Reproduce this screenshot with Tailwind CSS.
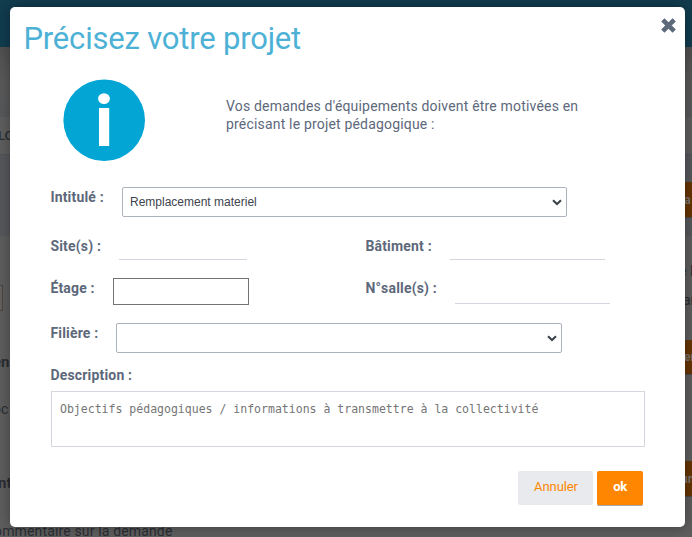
<!DOCTYPE html>
<html lang="fr">
<head>
<meta charset="utf-8">
<title>Précisez votre projet</title>
<script src="https://cdn.jsdelivr.net/npm/@tailwindcss/browser@4"></script>
</head>
<body class="relative h-[537px] w-[692px] overflow-hidden bg-[#5e5e5e] font-['Roboto',sans-serif] text-[#5d687b]">

<!-- dimmed page behind the dialog -->
<div class="flex h-[537px] flex-col overflow-hidden whitespace-nowrap text-[#2a2d33]" aria-hidden="true">
  <div class="h-[47px] shrink-0 bg-[#113d4f]"></div>
  <div class="h-[70px] shrink-0 bg-linear-to-b from-[#505050] via-[#5a5a5a] to-[#58595b]"></div>
  <div class="flex h-[38px] shrink-0 items-center border-b border-[#50545a] bg-[#5f5f5f] text-[13px] font-medium"><span class="-ml-[2px]">LO</span></div>
  <div class="flex h-[81px] shrink-0 items-start justify-end bg-[#56585c] pt-[27px]">
    <div class="flex h-9 w-[7px] items-center overflow-hidden border-b border-[#444950] bg-[#663500] text-[12px] font-bold text-[#7b746e]"><span class="-ml-[5px]">ra</span></div>
  </div>
  <div class="flex grow justify-between">
    <div class="flex w-[180px] flex-col overflow-hidden">
      <div class="mt-[49px] h-[26px] w-[3px] shrink-0 border-y border-r border-[#484643] bg-[#65615e]"></div>
      <div class="mt-[41px] h-5 text-[15px] leading-5 font-bold"><span class="-ml-[7px]">en</span></div>
      <div class="mt-[27px] h-5 text-[14px] leading-5"><span class="-ml-[7px]">oc</span></div>
      <div class="mt-[54px] h-5 text-[15px] leading-5 font-bold"><span class="-ml-[2px]">nt</span></div>
      <div class="mt-[28px] h-5 text-[14px] leading-5 tracking-[0.15px]"><span class="-ml-[6px]">ommentaire sur la demande</span></div>
    </div>
    <div class="flex w-[7px] flex-col overflow-hidden text-[14px]">
      <div class="mt-[25px] h-5 leading-5"><span class="-ml-[6px]">e H</span></div>
      <div class="mt-[9px] h-5 leading-5"><span class="-ml-[2px]">ar</span></div>
      <div class="mt-[30px] flex h-[35px] shrink-0 items-center border-b border-[#444950] bg-[#663500] text-[12px] font-bold text-[#7b746e]"><span class="-ml-px">er</span></div>
      <div class="mt-[86px] flex h-9 shrink-0 items-center border-b border-[#444950] bg-[#663500] text-[12px] font-bold text-[#7b746e]"><span class="-ml-[4px]">un</span></div>
    </div>
  </div>
</div>

<!-- dialog -->
<div role="dialog" class="absolute top-[7px] left-[10px] flex h-[520px] w-[675px] flex-col rounded-[5px] bg-white shadow-[0_0_14px_rgba(0,0,0,0.35)]">
  <div class="flex h-[72px] shrink-0 items-start justify-between pr-[9px] pl-[13.5px]">
    <h1 class="pt-[12px] text-[31px] leading-10 tracking-[-0.2px] text-[#4db1d6]">Précisez votre projet</h1>
    <svg class="mt-[11px] h-[15px] w-[15px]" viewBox="0 0 15 15" fill="none" stroke="#5d687b" stroke-width="4.6"><path d="M1.8 1.8 13.2 13.2M13.2 1.8 1.8 13.2"/></svg>
  </div>

  <div class="flex h-[82px] shrink-0 pl-[53px]">
    <svg class="h-[82px] w-[82px] shrink-0" viewBox="0 0 82 82"><circle cx="41.2" cy="41.2" r="40.8" fill="#03a5d5"/><ellipse cx="41" cy="19.6" rx="5.9" ry="5.4" fill="#fff"/><path d="M36 29h10.2v38H36z" fill="#fff"/></svg>
    <p class="mt-[18px] ml-[81px] w-[370px] text-[14px] leading-[18px] tracking-[0.18px]">Vos demandes d'équipements doivent être motivées en<br>précisant le projet pédagogique :</p>
  </div>

  <form class="flex flex-col pl-[40px] text-[14px] leading-5 font-bold">
    <div class="mt-[26px] flex h-[30px]">
      <label class="w-[72px] pl-[0.4px] tracking-[0.18px]">Intitulé :</label>
      <div class="flex h-[30px] w-[445px] items-center justify-between rounded-[2px] border border-[#adb3bc] pr-1 pl-[7px] font-['Liberation_Sans',sans-serif] text-[12px] font-normal text-[#3e444d]">
        <span>Remplacement materiel</span>
        <svg class="h-[7px] w-[10px]" viewBox="0 0 10 7" fill="none" stroke="#3a414b" stroke-width="2"><path d="M1 1.2 5 5 9 1.2"/></svg>
      </div>
    </div>
    <div class="mt-[19px] flex h-[24px]">
      <label class="w-[69px] pl-[0.4px] tracking-[0.18px]">Site(s) :</label>
      <div class="w-[128px] border-b border-[#d5d6dd]"></div>
      <label class="ml-[118px] w-[85px] pl-[0.4px] tracking-[0.18px]">Bâtiment :</label>
      <div class="w-[155px] border-b border-[#d5d6dd]"></div>
    </div>
    <div class="mt-[18px] flex h-[27px]">
      <label class="w-[63px] pl-[0.4px] tracking-[0.18px]">Étage :</label>
      <div class="w-[136px] border border-[#737373]"></div>
      <label class="ml-[116px] w-[90px] pl-[0.4px] tracking-[0.18px]">N°salle(s) :</label>
      <div class="h-[26px] w-[155px] border-b border-[#d5d6dd]"></div>
    </div>
    <div class="mt-[18px] flex h-[30px]">
      <label class="w-[66px] pl-[0.4px] tracking-[0.18px]">Filière :</label>
      <div class="flex h-[30px] w-[446px] items-center justify-end rounded-[2px] border border-[#adb3bc] pr-1">
        <svg class="h-[7px] w-[10px]" viewBox="0 0 10 7" fill="none" stroke="#3a414b" stroke-width="2"><path d="M1 1.2 5 5 9 1.2"/></svg>
      </div>
    </div>
    <label class="mt-[12px] h-[26px] pl-[0.4px] tracking-[0.18px]">Description :</label>
    <div class="ml-px h-[56px] w-[594px] border border-[#d5d6de] pt-[8px] pl-[8px] font-['DejaVu_Sans_Mono',monospace] text-[11.52px] leading-[18px] font-normal whitespace-nowrap text-[#757575]">Objectifs pédagogiques / informations à transmettre à la collectivité</div>
    <div class="mt-6 flex gap-1 pl-[468px] text-[13px]">
      <div class="flex h-[34px] w-[75px] items-center justify-center rounded-[2px] bg-[#e9eaee] pb-[2px] pl-px font-normal tracking-[-0.1px] text-[#ff8600]">Annuler</div>
      <div class="flex h-[35px] w-[46px] items-center justify-center rounded-[2px] border-b border-[#a3a7b0] bg-[#ff8600] pb-[2px] tracking-[-0.3px] text-white">ok</div>
    </div>
  </form>
</div>
</body>
</html>
